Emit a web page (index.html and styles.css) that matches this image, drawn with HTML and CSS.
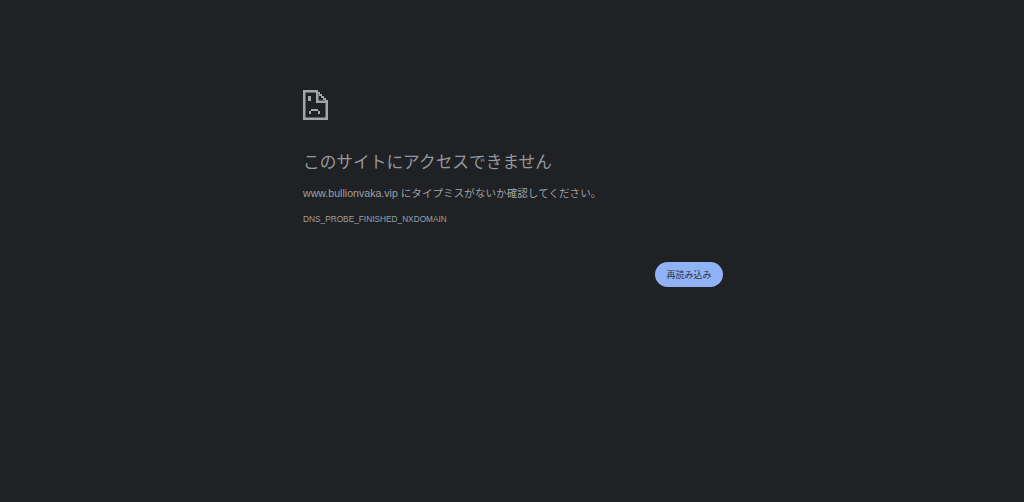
FILE: index.html
```html
<!DOCTYPE html>
<html lang="ja">
<head>
<meta charset="utf-8">
<title>www.bullionvaka.vip</title>
<link rel="stylesheet" href="styles.css">
</head>
<body>
<main class="wrapper">
  <svg class="icon" viewBox="0 0 25 30" width="25" height="30" aria-hidden="true">
    <path class="ink" fill-rule="evenodd" d="M0 0H15V2H17V4H19V6H21V8H23V10H25V30H0ZM2.500 2.500V27.500H22.500V13H13V2.500ZM15.500 3.500V10.500H22V10H20V8H18V6H16V3.500Z"/>
    <path class="ink" d="M5 6H8V11H5ZM8 19H15V21H8ZM6 21H8V24H6ZM15 21H17V24H15Z"/>
  </svg>
  <h1 class="title">このサイトにアクセスできません</h1>
  <p class="detail">www.bullionvaka.vip にタイプミスがないか確認してください。</p>
  <p class="code">DNS_PROBE_FINISHED_NXDOMAIN</p>
  <div class="actions"><button class="reload" type="button">再読み込み</button></div>
</main>
</body>
</html>
```
FILE: styles.css
```css
html, body { margin: 0; height: 100%; }
body {
  background: #202124;
  color: #9aa0a6;
  font-family: "Liberation Sans", "Noto Sans CJK JP", sans-serif;
  overflow: hidden;
}
.wrapper {
  box-sizing: border-box;
  width: 420px;
  margin: 0 0 0 303px;
  padding-top: 90px;
}
.icon { display: block; }
.ink { fill: #a3a5a8; }
.title {
  margin: 31px 0 0;
  font-size: 16.7px;
  line-height: 24px;
  font-weight: 400;
  color: #94979b;
}
.detail {
  margin: 10px 0 0;
  font-size: 10.6px;
  line-height: 16px;
  color: #9aa0a6;
}
.code {
  margin: 12px 0 0;
  font-size: 8.3px;
  line-height: 12px;
  color: #9aa0a6;
}
.actions {
  display: flex;
  justify-content: flex-end;
  margin-top: 37px;
}
.reload {
  width: 68px;
  height: 25px;
  padding: 0;
  border: 0;
  border-radius: 13px;
  background: #90b2f6;
  color: #2c313b;
  font: inherit;
  font-size: 9px;
}
```
